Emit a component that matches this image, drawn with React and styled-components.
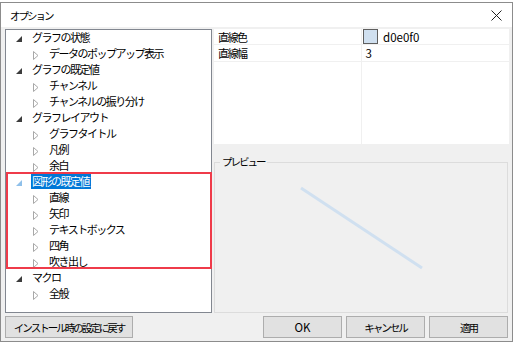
import styled, { createGlobalStyle } from "styled-components";

const GlobalStyle = createGlobalStyle`
  * { box-sizing: border-box; }
  body {
    margin: 0;
    background: #ffffff;
    font-family: "Noto Sans CJK JP", "Noto Sans", sans-serif;
    font-size: 11px;
    letter-spacing: -1.5px;
    color: #000;
  }
`;

const Window = styled.div`
  margin-top: 2px;
  width: 513px;
  height: 340px;
  border: 1px solid #8c8c8c;
  display: flex;
  flex-direction: column;
  background: #f0f0f0;
`;

const TitleBar = styled.div`
  height: 24px;
  background: #fff;
  display: flex;
  align-items: center;
  justify-content: space-between;
  padding: 0 10px 0 9px;
  font-size: 10.5px;
  letter-spacing: -2px;
`;

const Client = styled.div`
  flex: 1;
  display: flex;
  flex-direction: column;
  padding: 2px 2px 3px 4px;
`;

const Main = styled.div`
  height: 284px;
  display: flex;
  gap: 2px;
`;

const Tree = styled.div`
  position: relative;
  width: 208px;
  border: 1px solid #828790;
  background: #fff;
  padding-top: 1px;
`;

const Row = styled.div`
  height: 16px;
  display: flex;
  align-items: center;
  padding-left: ${(p) => (p.$level ? 24 : 7)}px;
  white-space: nowrap;
`;

const Expander = styled.span`
  width: 12px;
  height: 16px;
  display: flex;
  align-items: center;
  justify-content: center;
  margin-right: 6px;
`;

const Label = styled.span`
  line-height: 15px;
  margin-bottom: 3px;
  padding: 0 2px 0 1px;
  background: ${(p) => (p.$selected ? "#0078d7" : "transparent")};
  color: ${(p) => (p.$selected ? "#fff" : "#000")};
`;

const Highlight = styled.div`
  position: absolute;
  left: 0px;
  top: 142px;
  width: 206px;
  height: 97px;
  border: 2px solid #ef3b4a;
  pointer-events: none;
`;

const Right = styled.div`
  flex: 1;
  display: flex;
  flex-direction: column;
  gap: 18px;
`;

const Grid = styled.div`
  height: 118px;
  background: #fff;
  display: grid;
  grid-template-columns: 148px 1fr;
  grid-template-rows: 16px 17px 1fr;
  margin-right: 1px;
`;

const Cell = styled.div`
  display: flex;
  align-items: center;
  gap: 5px;
  padding-left: ${(p) => (p.$value ? 1 : 4)}px;
  border-bottom: ${(p) => (p.$last ? "none" : "1px solid #f0f0f0")};
  border-right: ${(p) => (p.$value ? "none" : "1px solid #f0f0f0")};
`;

const Value = styled.span`
  letter-spacing: 0;
  font-size: 11.5px;
`;

const Swatch = styled.span`
  width: 15px;
  height: 15px;
  border: 1px solid #5f5f5f;
  background: #d0e0f0;
`;

const Group = styled.div`
  position: relative;
  flex: 1;
  border: 1px solid #dcdcdc;
  margin-right: 2px;
`;

const GroupLabel = styled.span`
  position: absolute;
  top: -8px;
  left: 5px;
  padding: 0 2px;
  background: #f0f0f0;
  line-height: 14px;
  font-size: 10.5px;
  letter-spacing: -2px;
`;

const Footer = styled.div`
  margin-top: 3px;
  height: 22px;
  display: flex;
  gap: 4px;
`;

const Button = styled.button`
  width: ${(p) => p.$w || 79}px;
  height: 22px;
  margin-left: ${(p) => (p.$push ? "auto" : "0")};
  margin-right: ${(p) => (p.$end ? "2px" : "0")};
  border: 1px solid #adadad;
  background: #e1e1e1;
  font-family: inherit;
  font-size: 10.5px;
  letter-spacing: -2px;
  white-space: nowrap;
  color: #000;
  padding: 0;
`;

const openIcon = (selected) => (
  <svg width="6" height="6" viewBox="0 0 6 6">
    <polygon points="6,0 6,6 0,6" fill={selected ? "#8fc0ea" : "#3c3c3c"} />
  </svg>
);

const closedIcon = (
  <svg width="6" height="9" viewBox="0 0 6 9">
    <polygon points="0.5,0.5 5,4.5 0.5,8.5" fill="none" stroke="#a8a8a8" strokeWidth="1" />
  </svg>
);

const items = [
  ["グラフの状態", 0],
  ["データのポップアップ表示", 1],
  ["グラフの既定値", 0],
  ["チャンネル", 1],
  ["チャンネルの振り分け", 1],
  ["グラフレイアウト", 0],
  ["グラフタイトル", 1],
  ["凡例", 1],
  ["余白", 1],
  ["図形の既定値", 0, true],
  ["直線", 1],
  ["矢印", 1],
  ["テキストボックス", 1],
  ["四角", 1],
  ["吹き出し", 1],
  ["マクロ", 0],
  ["全般", 1],
];

export default function App() {
  return (
    <>
      <GlobalStyle />
      <Window>
        <TitleBar>
          <span>オプション</span>
          <svg width="11" height="11" viewBox="0 0 11 11">
            <path d="M0.5 0.5 L10.5 10.5 M10.5 0.5 L0.5 10.5" stroke="#222" strokeWidth="1" />
          </svg>
        </TitleBar>
        <Client>
          <Main>
            <Tree>
              {items.map(([text, level, selected]) => (
                <Row key={text} $level={level}>
                  <Expander>{level ? closedIcon : openIcon(selected)}</Expander>
                  <Label $selected={selected}>{text}</Label>
                </Row>
              ))}
              <Highlight />
            </Tree>
            <Right>
              <Grid>
                <Cell>直線色</Cell>
                <Cell $value>
                  <Swatch />
                  <Value>d0e0f0</Value>
                </Cell>
                <Cell>直線幅</Cell>
                <Cell $value>
                  <Value>&nbsp;3</Value>
                </Cell>
                <Cell $last />
                <Cell $value $last />
              </Grid>
              <Group>
                <GroupLabel>プレビュー</GroupLabel>
                <svg width="292" height="146">
                  <line x1="86" y1="25" x2="207" y2="105" stroke="#d0e0f0" strokeWidth="3" />
                </svg>
              </Group>
            </Right>
          </Main>
          <Footer>
            <Button $w={128}>インストール時の設定に戻す</Button>
            <Button $push>
              <Value>OK</Value>
            </Button>
            <Button>キャンセル</Button>
            <Button $end>適用</Button>
          </Footer>
        </Client>
      </Window>
    </>
  );
}
